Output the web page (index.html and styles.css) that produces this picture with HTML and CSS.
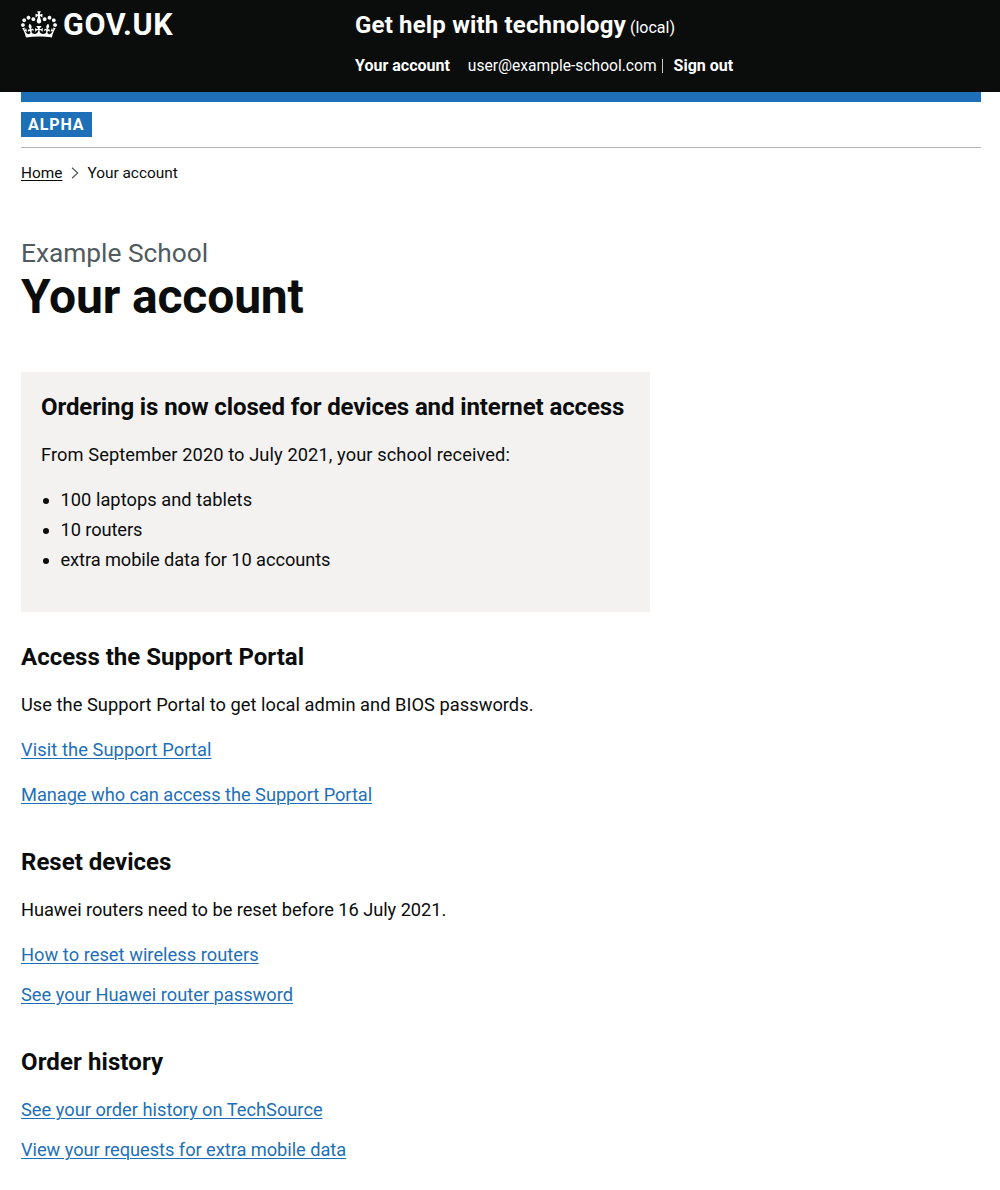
FILE: index.html
```html
<!DOCTYPE html>
<html lang="en">
<head>
<meta charset="utf-8">
<title>Your account - Get help with technology</title>
<link rel="stylesheet" href="styles.css">
</head>
<body>
<header class="header">
  <div class="header-inner">
    <a class="logo" href="#">
      <svg class="crown" viewBox="0 0 132 97" width="36" height="27" aria-hidden="true"><path fill="currentColor" fill-rule="evenodd" d="M25 30.2c3.5 1.5 7.7-.2 9.1-3.7 1.5-3.6-.2-7.8-3.9-9.2-3.6-1.4-7.6.3-9.1 3.9-1.4 3.5.3 7.5 3.9 9zM9 39.5c3.6 1.5 7.8-.2 9.2-3.7 1.5-3.6-.2-7.8-3.9-9.1-3.6-1.5-7.6.2-9.1 3.8-1.4 3.5.3 7.5 3.8 9zM4.4 57.2c3.5 1.5 7.7-.2 9.1-3.8 1.5-3.6-.2-7.7-3.9-9.1-3.5-1.5-7.6.3-9.1 3.8-1.4 3.5.3 7.6 3.9 9.1zm38.3-21.4c3.5 1.5 7.7-.2 9.1-3.8 1.5-3.6-.2-7.7-3.9-9.1-3.6-1.5-7.6.3-9.1 3.8-1.3 3.6.4 7.7 3.9 9.1zm64.4-5.6c-3.6 1.5-7.8-.2-9.1-3.7-1.5-3.6.2-7.8 3.8-9.2 3.6-1.4 7.7.3 9.2 3.9 1.3 3.5-.4 7.5-3.9 9zm15.9 9.3c-3.6 1.5-7.7-.2-9.1-3.7-1.5-3.6.2-7.8 3.7-9.1 3.6-1.5 7.7.2 9.2 3.8 1.5 3.5-.3 7.5-3.8 9zm4.7 17.7c-3.6 1.5-7.8-.2-9.2-3.8-1.5-3.6.2-7.7 3.9-9.1 3.6-1.5 7.7.3 9.2 3.8 1.3 3.5-.4 7.6-3.9 9.1zM89.3 35.8c-3.6 1.5-7.8-.2-9.2-3.8-1.4-3.6.2-7.7 3.9-9.1 3.6-1.5 7.7.3 9.2 3.8 1.4 3.6-.3 7.7-3.9 9.1zM69.7 17.7l8.9 4.7V9.3l-8.9 2.8c-.2-.3-.5-.6-.9-.9L72.4 0H59.6l3.5 11.2c-.3.3-.6.5-.9.9l-8.8-2.8v13.1l8.8-4.7c.3.3.6.7.9.9l-5 15.4v.1c-.2.8-.4 1.6-.4 2.4 0 4.1 3.1 7.5 7 8.1h.2c.3 0 .7.1 1 .1.4 0 .7 0 1-.1h.2c4-.6 7.1-4.1 7.1-8.1 0-.8-.1-1.7-.4-2.4V34l-5.1-15.4c.4-.2.7-.6 1-.9zM66 92.8c16.9 0 32.8 1.1 47.1 3.2 4-16.9 8.9-26.7 14-33.5l-9.6-3.4c1 4.9 1.1 7.2 0 10.2-1.5-1.4-3-4.3-4.2-8.7L108.6 76c2.8-2 5-3.2 7.5-3.3-4.4 9.4-10 11.9-13.6 11.2-4.3-.8-6.3-4.6-5.6-7.9 1-4.7 5.7-5.9 8-.5 4.3-8.7-3-11.4-7.6-8.8 7.1-7.2 7.9-13.5 2.1-21.1-8 6.1-8.1 12.3-4.5 20.8-4.7-5.4-12.1-2.5-9.5 6.2 3.4-5.2 7.9-2 7.2 3.1-.6 4.3-6.4 7.8-13.5 7.2-10.3-.9-10.9-8-11.2-13.8 2.5-.5 7.1 1.8 11 7.3L80.2 60c-4.1 4.4-8 5.3-12.3 5.4 1.4-4.4 8-11.6 8-11.6H55.5s6.4 7.2 7.9 11.6c-4.2-.1-8-1-12.3-5.4l1.4 16.4c3.9-5.5 8.5-7.7 10.9-7.3-.3 5.8-.9 12.8-11.1 13.8-7.2.6-12.9-2.9-13.5-7.2-.7-5 3.8-8.3 7.1-3.1 2.7-8.7-4.6-11.6-9.4-6.2 3.7-8.5 3.6-14.7-4.6-20.8-5.8 7.6-5 13.9 2.2 21.1-4.7-2.6-11.9.1-7.7 8.8 2.3-5.5 7.1-4.2 8.1.5.7 3.3-1.3 7.1-5.7 7.9-3.5.7-9-1.8-13.5-11.2 2.5.1 4.7 1.3 7.5 3.3l-4.7-15.4c-1.2 4.4-2.7 7.2-4.3 8.7-1.1-3-.9-5.3 0-10.2l-9.5 3.4c5 6.9 9.9 16.7 14 33.5 14.8-2.1 30.8-3.2 47.7-3.2z"/></svg>
      <span class="logo-text">GOV.UK</span>
    </a>
    <div class="header-content">
      <div class="service"><a class="service-name" href="#">Get help with technology</a><span class="env">(local)</span></div>
      <nav class="nav">
        <a class="nav-link" href="#">Your account</a>
        <span class="user">user@example-school.com</span><span class="divider"></span>
        <a class="nav-link sign-out" href="#">Sign out</a>
      </nav>
    </div>
  </div>
</header>
<div class="container">
  <div class="phase-banner"><strong class="tag">ALPHA</strong></div>
  <nav class="breadcrumbs">
    <a class="crumb-link" href="#">Home</a>
    <svg class="chevron" width="8" height="12" viewBox="0 0 8 12" aria-hidden="true"><path d="M1 .7l5.7 5.3L1 11.3" fill="none" stroke="#505a5f" stroke-width="1.2"/></svg>
    <span>Your account</span>
  </nav>
  <main>
    <h1 class="title"><span class="caption">Example School</span>Your account</h1>
    <section class="panel">
      <h2 class="heading heading-closed">Ordering is now closed for devices and internet access</h2>
      <p class="text wide">From September 2020 to July 2021, your school received:</p>
      <ul class="list">
        <li class="slightly-wide">100 laptops and tablets</li>
        <li class="narrow">10 routers</li>
        <li class="narrow">extra mobile data for 10 accounts</li>
      </ul>
    </section>
    <section class="section">
      <h2 class="heading">Access the Support Portal</h2>
      <p class="text slightly-wide">Use the Support Portal to get local admin and BIOS passwords.</p>
      <p class="text wide"><a class="link" href="#">Visit the Support Portal</a></p>
      <p class="text slightly-narrow"><a class="link" href="#">Manage who can access the Support Portal</a></p>
    </section>
    <section class="section">
      <h2 class="heading">Reset devices</h2>
      <p class="text slightly-narrow">Huawei routers need to be reset before 16 July 2021.</p>
      <ul class="link-list">
        <li class="slightly-wide"><a class="link" href="#">How to reset wireless routers</a></li>
        <li><a class="link" href="#">See your Huawei router password</a></li>
      </ul>
    </section>
    <section class="section">
      <h2 class="heading heading-order">Order history</h2>
      <ul class="link-list">
        <li><a class="link" href="#">See your order history on TechSource</a></li>
        <li class="slightly-narrow"><a class="link" href="#">View your requests for extra mobile data</a></li>
      </ul>
    </section>
  </main>
</div>
</body>
</html>
```
FILE: styles.css
```css
* { box-sizing: border-box; }
body { margin: 0; background: #fff; color: #0b0c0c; font-family: Roboto, "Liberation Sans", sans-serif; }
h1, h2, p, ul { margin: 0; }
a { color: inherit; text-decoration: none; }

.header { height: 92px; background: #0b0c0c; color: #fff; }
.header-inner { display: flex; width: 960px; height: 102px; margin-left: 21px; border-bottom: 10px solid #1d70b8; }
.logo { display: flex; align-items: flex-start; width: 334px; gap: 6px; }
.crown { margin-top: 11px; }
.logo-text { margin-top: 10px; font-size: 30.5px; line-height: 30px; font-weight: 700; letter-spacing: 0.65px; }
.service { display: flex; align-items: baseline; gap: 4px; margin-top: 10px; line-height: 30px; }
.service-name { font-size: 24px; font-weight: 700; letter-spacing: 0.17px; }
.env { font-size: 16px; }
.nav { display: flex; align-items: center; height: 20px; margin-top: 13px; font-size: 16px; line-height: 20px; }
.nav-link { font-weight: 700; }
.user { margin-left: 18px; font-size: 15.6px; }
.divider { width: 1px; height: 14px; margin: 0 11px 0 5px; background: #c8c8c8; }

.container { width: 960px; margin-left: 21px; }
.phase-banner { height: 56px; padding-top: 20px; border-bottom: 1px solid #b1b4b6; }
.tag { display: block; width: 71px; height: 25px; padding-left: 7px; background: #1d70b8; color: #fff; font-size: 16px; line-height: 25px; letter-spacing: 0.9px; }
.breadcrumbs { display: flex; align-items: center; height: 20px; margin-top: 15px; font-size: 15.4px; line-height: 20px; }
.crumb-link { text-decoration: underline; text-underline-offset: 2px; text-decoration-thickness: 1px; }
.chevron { margin: 0 8px 0 9px; }

.title { margin: 55px 0 50px; font-size: 48px; line-height: 50px; letter-spacing: -0.15px; }
.caption { display: block; margin-bottom: 4px; color: #505a5f; font-size: 26.3px; font-weight: 400; line-height: 30px; letter-spacing: 0; }
.panel { width: 629px; height: 240px; padding: 20px; background: #f3f2f1; }
.heading { margin-bottom: 20px; font-size: 24px; line-height: 30px; }
.heading-closed { letter-spacing: -0.11px; }
.heading-order { letter-spacing: 0.1px; }
.text { margin-bottom: 20px; font-size: 18.25px; line-height: 25px; }
.list { padding-left: 19.5px; font-size: 18.25px; line-height: 25px; }
.list li { margin-bottom: 5px; }
.section { margin-top: 30px; }
.section + .section { margin-top: 40px; }
.link-list { padding: 0; list-style: none; font-size: 18.25px; line-height: 25px; }
.link-list li { margin-bottom: 15px; }
.link { color: #1d70b8; text-decoration: underline; text-decoration-thickness: 1px; text-underline-offset: 2px; }

.wide { letter-spacing: 0.09px; }
.slightly-wide { letter-spacing: 0.035px; }
.slightly-narrow { letter-spacing: -0.05px; }
.narrow { letter-spacing: -0.09px; }
```
